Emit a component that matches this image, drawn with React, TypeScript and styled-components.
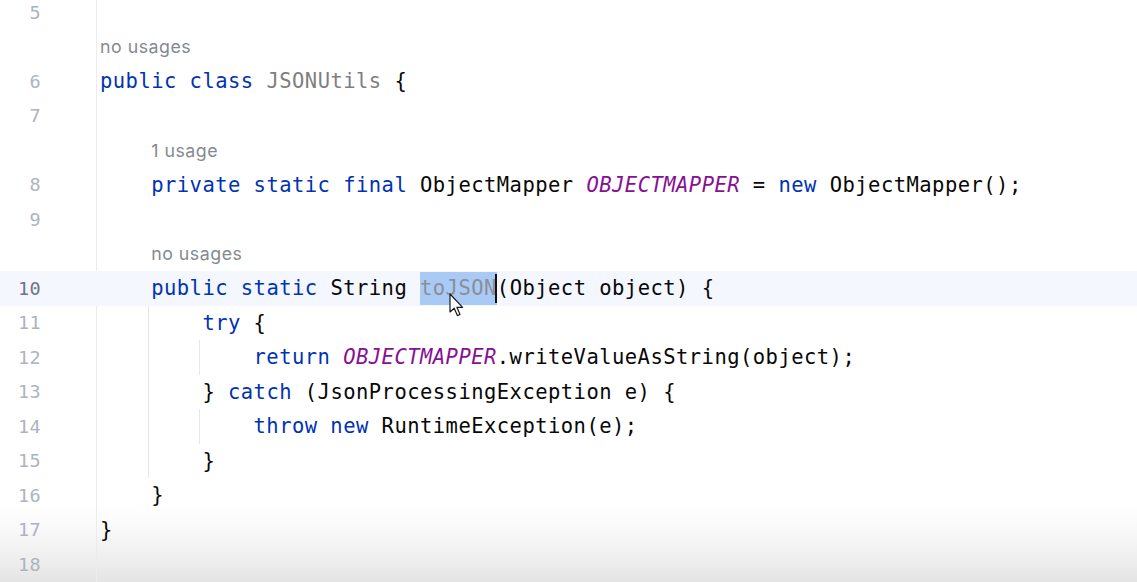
import React from "react";
import styled, { createGlobalStyle, css } from "styled-components";

const CHAR_W = 12.8;
const ROW_H = 34.5;
const CODE_FS = 20.5;
const LS = CHAR_W - CODE_FS * 0.602;

const Global = createGlobalStyle`
  html, body { margin: 0; padding: 0; background: #ffffff; }
  body { width: 1137px; height: 582px; overflow: hidden; }
  #root { width: 1137px; height: 582px; }
`;

const Editor = styled.div`
  position: relative;
  width: 1137px;
  height: 582px;
  overflow: hidden;
  background: linear-gradient(to bottom, #ffffff 0px, #ffffff 505px, #fafbfa 522px, #eeeeee 560px, #e3e4e3 582px);
`;

const Lines = styled.div`
  display: flex;
  flex-direction: column;
  margin-top: -5px;
`;

const Row = styled.div<{ $current?: boolean }>`
  display: grid;
  grid-template-columns: 96px 1fr;
  height: ${ROW_H}px;
  background: ${(p) => (p.$current ? "#f4f7fe" : "transparent")};
`;

const Gutter = styled.div<{ $current?: boolean }>`
  display: flex;
  align-items: center;
  justify-content: flex-end;
  padding-right: 55px;
  font-family: "DejaVu Sans Mono", "Liberation Mono", monospace;
  font-size: 18.5px;
  letter-spacing: 0.3px;
  color: ${(p) => (p.$current ? "#6f7382" : "#aeb3c2")};
`;

const Code = styled.div<{ $current?: boolean }>`
  display: flex;
  align-items: center;
  height: ${ROW_H}px;
  padding-left: 3px;
  border-left: 1px solid ${(p) => (p.$current ? "transparent" : "#ebecef")};
  font-family: "DejaVu Sans Mono", "Liberation Mono", monospace;
  font-size: ${CODE_FS}px;
  letter-spacing: ${LS}px;
  color: #080808;
  white-space: pre;
`;

const IndentUnit = styled.span<{ $guide?: boolean }>`
  position: relative;
  display: inline-block;
  flex: none;
  width: ${CHAR_W * 4}px;
  height: ${ROW_H}px;
  ${(p) =>
    p.$guide &&
    css`
      &::before {
        content: "";
        position: absolute;
        left: -3px;
        top: 0;
        bottom: 0;
        width: 1px;
        background: #e6e7ea;
      }
    `}
`;

const Hint = styled.span`
  font-family: Inter, "Noto Sans", sans-serif;
  font-size: 17.8px;
  letter-spacing: 0.5px;
  color: #858a91;
`;

type Kind = "kw" | "plain" | "unused" | "field" | "sel";

const Tok = styled.span<{ $k: Kind }>`
  ${(p) => p.$k === "kw" && css`color: #0033b3;`}
  ${(p) => p.$k === "plain" && css`color: #080808;`}
  ${(p) => p.$k === "unused" && css`color: #7f7f7f;`}
  ${(p) => p.$k === "field" && css`color: #871094; font-style: italic;`}
  ${(p) =>
    p.$k === "sel" &&
    css`
      color: #8a8f98;
      background: #a9caf5;
      display: inline-block;
      line-height: 33px;
    `}
`;

const Caret = styled.span`
  display: inline-block;
  width: 2px;
  height: 29px;
  margin-left: -2px;
  background: #111;
`;

const Pointer = styled.svg`
  position: absolute;
  left: 449px;
  top: 293px;
  width: 16px;
  height: 26px;
  pointer-events: none;
`;

type Token = [string, Kind];
type Line =
  | { type: "hint"; indent: number; text: string }
  | { type: "code"; num: number; indent: number; guides?: number[]; tokens: Token[]; current?: boolean; caretAfter?: number };

const lines: Line[] = [
  { type: "code", num: 5, indent: 0, tokens: [] },
  { type: "hint", indent: 0, text: "no usages" },
  {
    type: "code",
    num: 6,
    indent: 0,
    tokens: [["public class ", "kw"], ["JSONUtils", "unused"], [" {", "plain"]],
  },
  { type: "code", num: 7, indent: 0, tokens: [] },
  { type: "hint", indent: 1, text: "1 usage" },
  {
    type: "code",
    num: 8,
    indent: 1,
    tokens: [
      ["private static final ", "kw"],
      ["ObjectMapper ", "plain"],
      ["OBJECTMAPPER", "field"],
      [" = ", "plain"],
      ["new ", "kw"],
      ["ObjectMapper();", "plain"],
    ],
  },
  { type: "code", num: 9, indent: 0, tokens: [] },
  { type: "hint", indent: 1, text: "no usages" },
  {
    type: "code",
    num: 10,
    indent: 1,
    current: true,
    caretAfter: 2,
    tokens: [
      ["public static ", "kw"],
      ["String ", "plain"],
      ["toJSON", "sel"],
      ["(Object object) {", "plain"],
    ],
  },
  { type: "code", num: 11, indent: 2, guides: [1], tokens: [["try ", "kw"], ["{", "plain"]] },
  {
    type: "code",
    num: 12,
    indent: 3,
    guides: [1, 2],
    tokens: [["return ", "kw"], ["OBJECTMAPPER", "field"], [".writeValueAsString(object);", "plain"]],
  },
  {
    type: "code",
    num: 13,
    indent: 2,
    guides: [1],
    tokens: [["} ", "plain"], ["catch ", "kw"], ["(JsonProcessingException e) {", "plain"]],
  },
  {
    type: "code",
    num: 14,
    indent: 3,
    guides: [1, 2],
    tokens: [["throw new ", "kw"], ["RuntimeException(e);", "plain"]],
  },
  { type: "code", num: 15, indent: 2, guides: [1], tokens: [["}", "plain"]] },
  { type: "code", num: 16, indent: 1, tokens: [["}", "plain"]] },
  { type: "code", num: 17, indent: 0, tokens: [["}", "plain"]] },
  { type: "code", num: 18, indent: 0, tokens: [] },
];

const Indent: React.FC<{ level: number; guides?: number[] }> = ({ level, guides = [] }) => (
  <>
    {Array.from({ length: level }).map((_, i) => (
      <IndentUnit key={i} $guide={guides.includes(i)} />
    ))}
  </>
);

export default function App() {
  return (
    <>
      <Global />
      <Editor>
        <Lines>
          {lines.map((l, idx) =>
            l.type === "hint" ? (
              <Row key={idx}>
                <Gutter />
                <Code>
                  <Indent level={l.indent} />
                  <Hint>{l.text}</Hint>
                </Code>
              </Row>
            ) : (
              <Row key={idx} $current={l.current}>
                <Gutter $current={l.current}>{l.num}</Gutter>
                <Code $current={l.current}>
                  <Indent level={l.indent} guides={l.guides} />
                  {l.tokens.map(([t, k], i) => (
                    <React.Fragment key={i}>
                      <Tok $k={k}>{t}</Tok>
                      {l.caretAfter === i && <Caret />}
                    </React.Fragment>
                  ))}
                </Code>
              </Row>
            )
          )}
        </Lines>
        <Pointer viewBox="0 0 16 26">
          <path
            d="M1 1 L1 19 L5.2 15.2 L8.4 22.6 L11 21.5 L7.9 14.3 L13.6 14.3 Z"
            fill="#ffffff"
            stroke="#1a1a1a"
            strokeWidth="1.2"
            strokeLinejoin="round"
          />
        </Pointer>
      </Editor>
    </>
  );
}
